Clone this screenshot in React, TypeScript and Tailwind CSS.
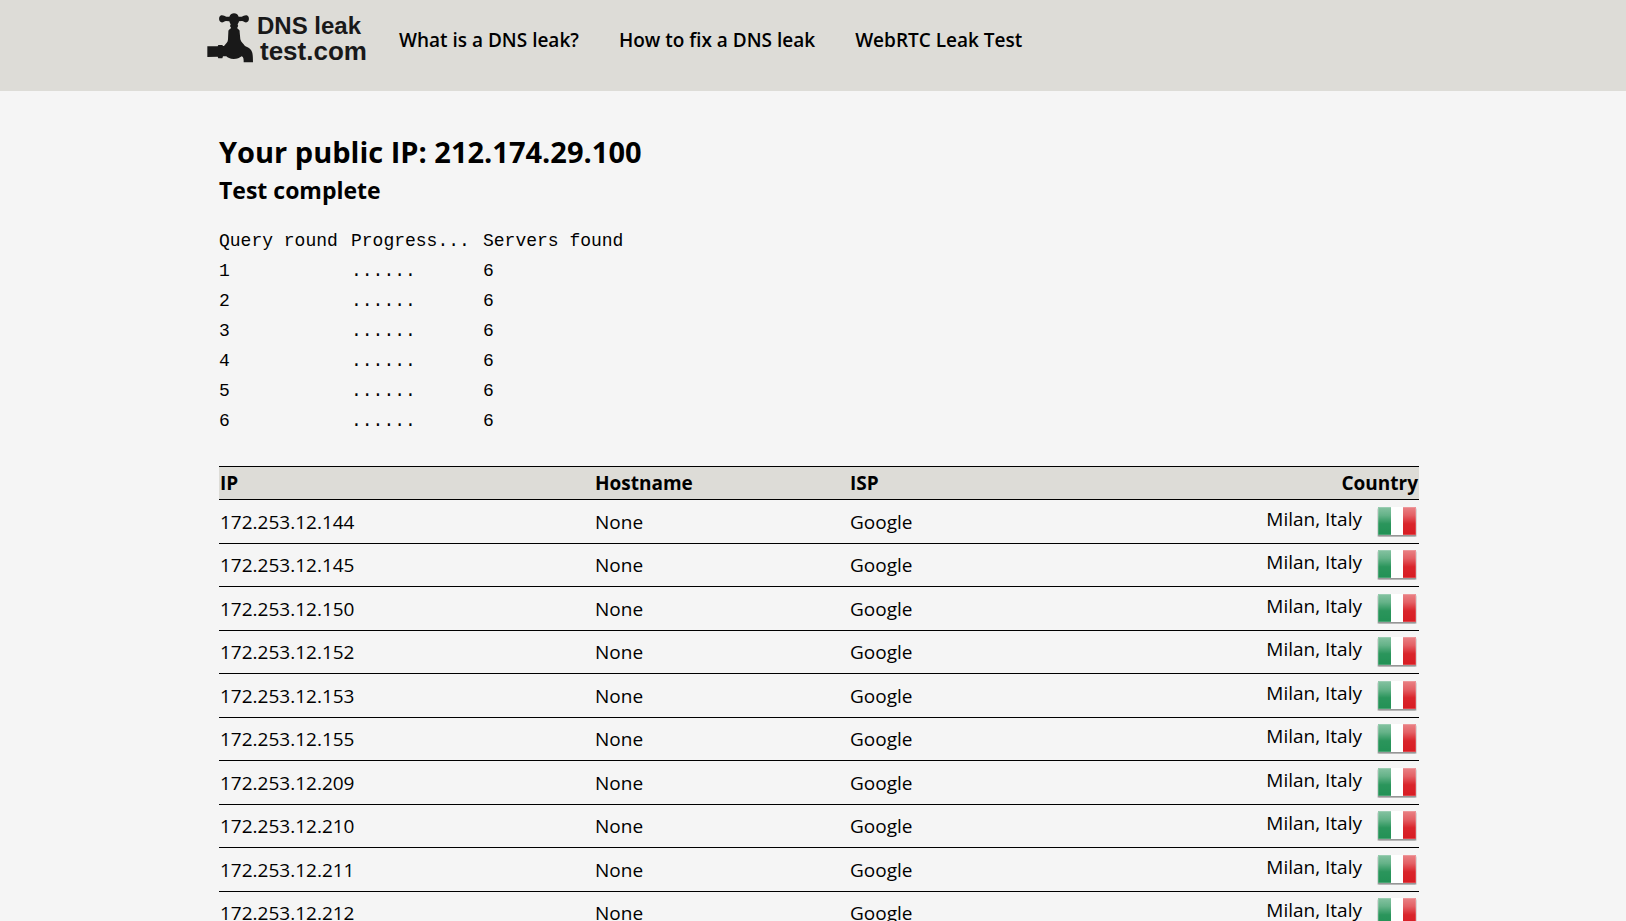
const navLinks = ["What is a DNS leak?", "How to fix a DNS leak", "WebRTC Leak Test"];

const rounds = [1, 2, 3, 4, 5, 6];

const servers = [144, 145, 150, 152, 153, 155, 209, 210, 211, 212].map((n) => `172.253.12.${n}`);

function Faucet() {
  return (
    <svg viewBox="34 39 138 150" className="h-[50px] w-[46px]" fill="#191919" aria-hidden="true">
      <path d="M77 46 C83 45 87 49 92 50 L101 50 C104 43 109 40 115 40 C122 40 126 43 129 50 L138 50 C143 49 147 45 153 46 C162 48 162 65 153 67 C147 68 144 63 139 63 L130 64 C129 70 126 71 126 75 C129 77 127 80 125 82 L126 87 C132 89 132 92 132 97 L134 118 C136 127 143 131 148 138 C154 142 161 143 166 150 C171 157 172 166 172 187 L144 187 C144 178 144 171 138 169 C132 174 124 177 114 177 C103 177 96 173 92 169 L82 169 L80 175 L68 175 L66 170 L35 171 L35 139 L66 139 L68 135 L80 135 L82 138 L85 138 C91 131 97 127 97 118 L98 97 C98 92 98 89 104 87 L106 82 C102 80 103 76 105 74 C104 70 102 69 101 64 L91 63 C86 63 83 68 77 67 C68 65 68 48 77 46 Z" />
    </svg>
  );
}

function ItalyFlag() {
  return (
    <svg viewBox="0 0 40 30" className="h-[30px] w-10" role="img" aria-label="Italy">
      <defs>
        <linearGradient id="gloss" x1="0" y1="0" x2="0" y2="1">
          <stop offset="0" stopColor="#fff" stopOpacity="0.45" />
          <stop offset="0.3" stopColor="#fff" stopOpacity="0.3" />
          <stop offset="0.6" stopColor="#fff" stopOpacity="0.04" />
          <stop offset="1" stopColor="#fff" stopOpacity="0" />
        </linearGradient>
      </defs>
      <rect x="0" y="1" width="40" height="29" rx="1.5" fill="#000" opacity="0.12" />
      <rect x="1" y="2" width="38" height="27.5" rx="1" fill="#000" opacity="0.3" />
      <rect x="1" y="0" width="38" height="28" rx="1" fill="#fff" />
      <path d="M2 0H14V28H2A1 1 0 0 1 1 27V1A1 1 0 0 1 2 0Z" fill="#229155" />
      <path d="M26 0H38A1 1 0 0 1 39 1V27A1 1 0 0 1 38 28H26Z" fill="#d81c23" />
      <rect x="1" y="0" width="38" height="28" rx="1" fill="url(#gloss)" />
      <rect x="1.5" y="0.5" width="37" height="27" rx="1" fill="none" stroke="#fff" strokeOpacity="0.18" />
    </svg>
  );
}

export default function App() {
  return (
    <div className="min-h-screen bg-[#f5f5f5] font-['Open_Sans','Noto_Sans',sans-serif] text-black">
      <header className="h-[91px] bg-[#dddcd7]">
        <div className="mx-auto flex max-w-[1212px] items-start">
          <a href="#" className="flex w-48 shrink-0 items-start pt-[13px] font-['Liberation_Sans',Arial,sans-serif] font-bold text-[#191919]">
            <Faucet />
            <span className="flex flex-col pl-1 whitespace-nowrap">
              <span className="text-2xl leading-[26px]">DNS leak</span>
              <span className="pl-[3px] text-[26px] leading-6">test.com</span>
            </span>
          </a>
          <nav className="flex gap-10 pt-[26px] text-[19px] leading-7 font-semibold">
            {navLinks.map((label) => (
              <a key={label} href="#" className="whitespace-nowrap">
                {label}
              </a>
            ))}
          </nav>
        </div>
      </header>

      <main className="mx-auto max-w-[1212px] pt-[43px] pl-3">
        <h1 className="text-[29px] leading-9 font-bold">Your public IP: 212.174.29.100</h1>
        <h2 className="text-[23px] leading-10 font-bold">Test complete</h2>

        <table className="mt-4 font-['Liberation_Mono',monospace] text-lg leading-[30px]">
          <thead>
            <tr className="text-left">
              <th className="w-33 p-0 font-normal whitespace-nowrap">Query round</th>
              <th className="w-33 p-0 font-normal whitespace-nowrap">Progress...</th>
              <th className="p-0 font-normal whitespace-nowrap">Servers found</th>
            </tr>
          </thead>
          <tbody>
            {rounds.map((n) => (
              <tr key={n}>
                <td className="p-0">{n}</td>
                <td className="p-0">......</td>
                <td className="p-0">6</td>
              </tr>
            ))}
          </tbody>
        </table>

        <table className="mt-[30px] w-full table-fixed border-collapse text-[19px] leading-7">
          <colgroup>
            <col className="w-[31.25%]" />
            <col className="w-[21.25%]" />
            <col className="w-[23.5%]" />
            <col />
          </colgroup>
          <thead>
            <tr className="h-[33px] border-y border-black bg-[#dddcd7] text-left">
              <th className="px-px py-0">IP</th>
              <th className="px-px py-0">Hostname</th>
              <th className="px-px py-0">ISP</th>
              <th className="px-px py-0 text-right">Country</th>
            </tr>
          </thead>
          <tbody>
            {servers.map((ip) => (
              <tr key={ip} className="border-b border-black odd:h-11 even:h-[43px]">
                <td className="px-px py-0">{ip}</td>
                <td className="px-px py-0">None</td>
                <td className="px-px py-0">Google</td>
                <td className="py-0 pr-0.5 pl-0">
                  <div className="flex items-start justify-end gap-[15px]">
                    <span className="leading-6">Milan, Italy</span>
                    <ItalyFlag />
                  </div>
                </td>
              </tr>
            ))}
          </tbody>
        </table>
      </main>
    </div>
  );
}
